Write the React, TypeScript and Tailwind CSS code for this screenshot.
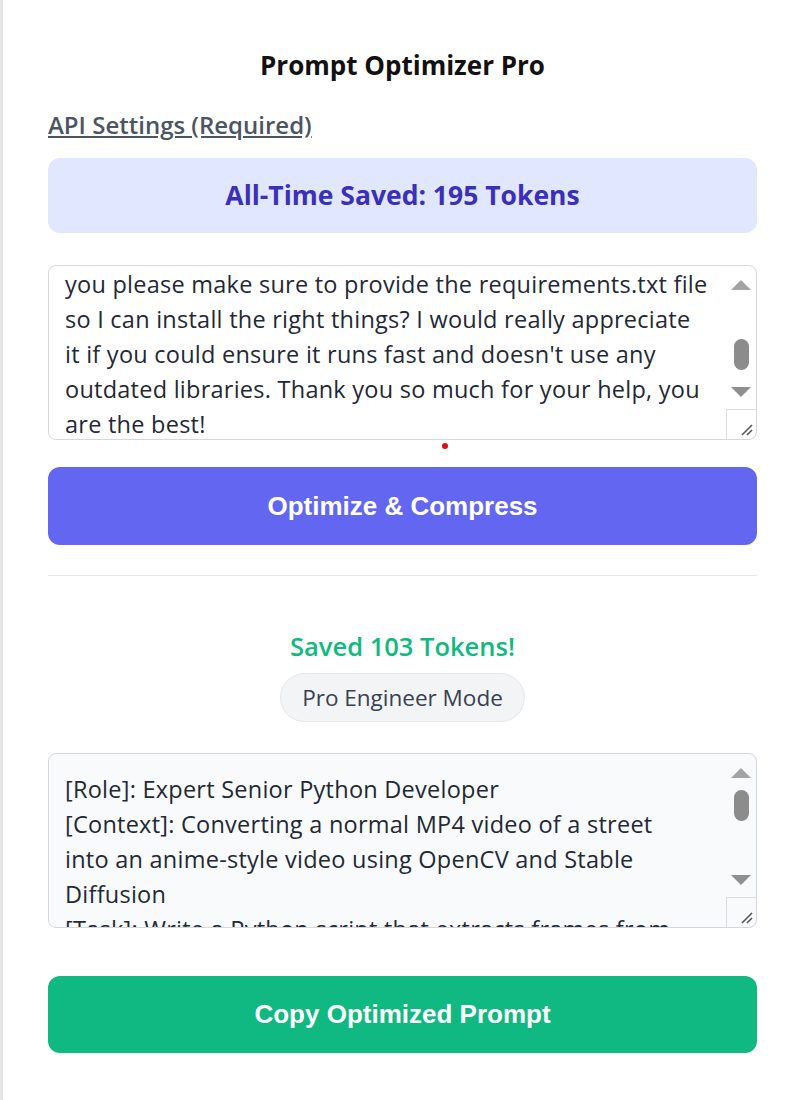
const inputLines = [
  "you please make sure to provide the requirements.txt file",
  "so I can install the right things? I would really appreciate",
  "it if you could ensure it runs fast and doesn't use any",
  "outdated libraries. Thank you so much for your help, you",
  "are the best!",
];

const outputLines = [
  "[Role]: Expert Senior Python Developer",
  "[Context]: Converting a normal MP4 video of a street",
  "into an anime-style video using OpenCV and Stable",
  "Diffusion",
  "[Task]: Write a Python script that extracts frames from",
];

function Arrow({ down = false }: { down?: boolean }) {
  return (
    <svg width="20" height="10" viewBox="0 0 20 10" className="shrink-0">
      {down ? <polygon points="0,0 20,0 10,10" fill="#8f8f8f" /> : <polygon points="10,0 20,10 0,10" fill="#a3a3a3" />}
    </svg>
  );
}

function Scrollbar({ thumbClass }: { thumbClass: string }) {
  return (
    <div className="flex w-[30px] shrink-0 flex-col">
      <div className="flex flex-1 flex-col items-center pt-[14px] pb-[12px]">
        <Arrow />
        <div className={`h-[31px] w-[15px] rounded-full bg-[#8c8c8c] ${thumbClass}`} />
        <div className="flex-1" />
        <Arrow down />
      </div>
      <div className="flex h-[30px] items-end justify-end border-t border-l border-[#dcdcdc] p-[2px]">
        <svg width="14" height="14" viewBox="0 0 14 14">
          <line x1="2" y1="12" x2="12" y2="2" stroke="#555" strokeWidth="1.6" />
          <line x1="7" y1="12" x2="12" y2="7" stroke="#555" strokeWidth="1.6" />
        </svg>
      </div>
    </div>
  );
}

function FakeTextarea({ lines, thumbClass, bg, padTop }: { lines: string[]; thumbClass: string; bg: string; padTop: string }) {
  return (
    <div className={`flex h-[175px] overflow-hidden rounded-[8px] border border-[#d4d7dc] ${bg}`}>
      <div className={`flex-1 overflow-hidden pl-[16px] ${padTop}`}>
        {lines.map((line, i) => (
          <div key={i} className="h-[35px] whitespace-nowrap text-[23.5px] leading-[35px] tracking-[0.25px] text-[#1f2937]">
            {line}
          </div>
        ))}
      </div>
      <Scrollbar thumbClass={thumbClass} />
    </div>
  );
}

export default function App() {
  return (
    <div
      className="min-h-[1100px] border-l-[3px] border-[#e6e6e6] bg-white pr-[43px] pl-[45px]"
      style={{ fontFamily: '"Open Sans", "Noto Sans", sans-serif' }}
    >
      <div className="flex flex-col pt-[48px]">
        <h1 className="text-center text-[26px] leading-[34px] font-bold text-[#111]">Prompt Optimizer Pro</h1>

        <a className="mt-[29px] self-start text-[24px] leading-[28px] font-semibold text-[#4b5563] underline">
          API Settings (Required)
        </a>

        <div className="mt-[19px] flex h-[75px] items-center justify-center rounded-[12px] bg-[#e0e7ff]">
          <span className="text-[26.5px] font-bold text-[#3b30b8]">All-Time Saved: 195 Tokens</span>
        </div>

        <div className="relative mt-[32px]">
          <FakeTextarea lines={inputLines} thumbClass="mt-[49px]" bg="bg-white" padTop="pt-[1px]" />
          <div className="absolute top-[178px] left-[394px] h-[6px] w-[6px] rounded-full bg-[#e01010]" />
        </div>

        <button
          className="mt-[27px] h-[78px] rounded-[12px] bg-[#6366f1] text-[26px] font-bold text-white"
          style={{ fontFamily: '"Liberation Sans", Arial, sans-serif' }}
        >
          Optimize &amp; Compress
        </button>

        <div className="mt-[30px] h-px bg-[#e5e7eb]" />

        <div className="mt-[53px] text-center text-[25.5px] leading-[34px] font-semibold text-[#10b981]">
          Saved 103 Tokens!
        </div>

        <div className="mt-[10px] flex justify-center">
          <span className="flex h-[49px] items-center rounded-full border border-[#e5e7eb] bg-[#f3f4f6] px-[21px] text-[22.5px] text-[#374151]">
            Pro Engineer Mode
          </span>
        </div>

        <div className="mt-[31px]">
          <FakeTextarea lines={outputLines} thumbClass="mt-[12px]" bg="bg-[#f9fafb]" padTop="pt-[18px]" />
        </div>

        <button
          className="mt-[48px] h-[77px] rounded-[12px] bg-[#10b981] text-[26px] font-bold text-white"
          style={{ fontFamily: '"Liberation Sans", Arial, sans-serif' }}
        >
          Copy Optimized Prompt
        </button>
      </div>
    </div>
  );
}
